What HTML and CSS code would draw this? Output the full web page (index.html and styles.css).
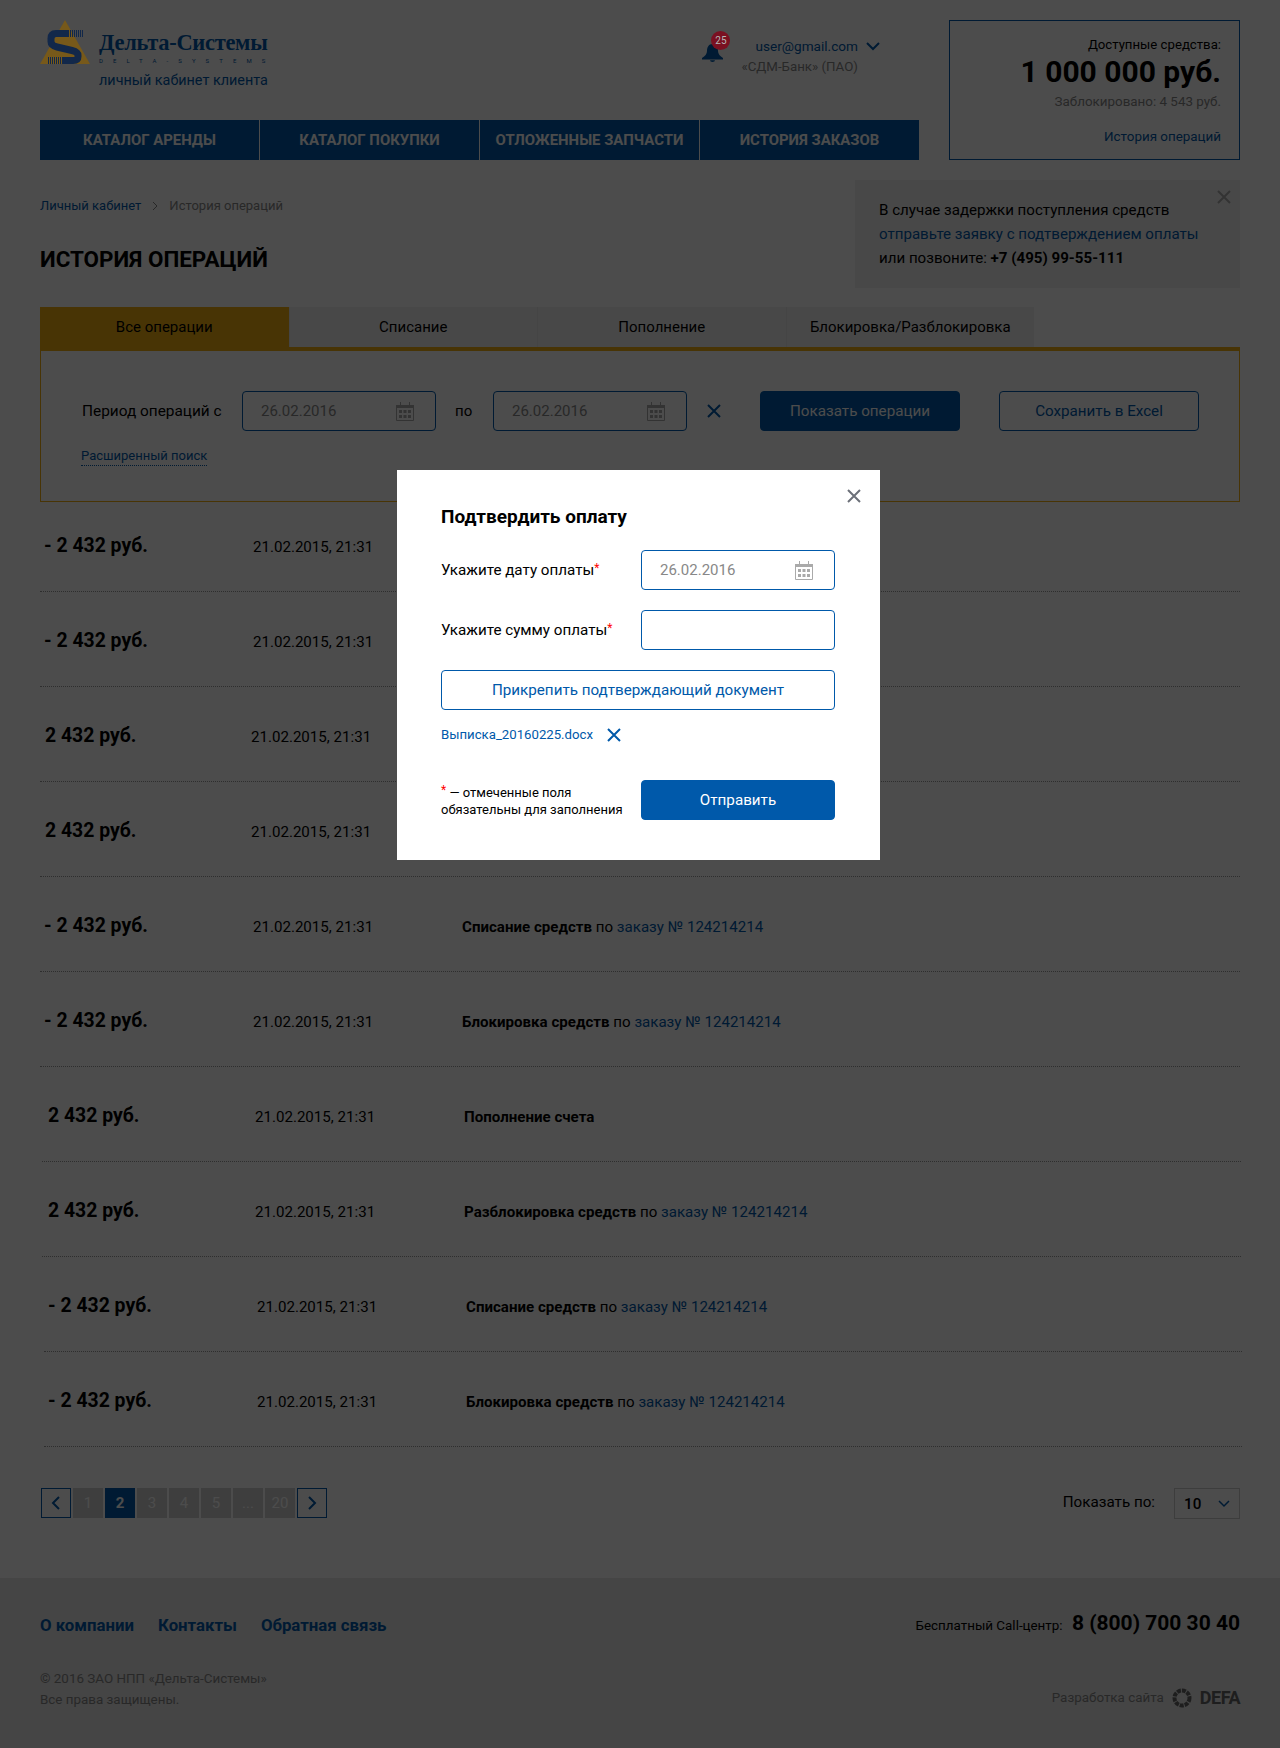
FILE: index.html
```html
<!DOCTYPE html>
<html lang="ru">

<head>
  <meta charset="utf-8">
  <title>История операций</title>
  <link rel="stylesheet" href="styles.css">
</head>

<body>
  <svg class="sprite" width="0" height="0">
    <symbol id="cal" viewBox="0 0 20 20">
      <path d="M1.500 4.500h17v15h-17z" fill="none" stroke="currentColor"/>
      <path d="M1 4h18v3H1zM5 1h1v3H5zM14 1h1v3h-1z" fill="currentColor"/>
      <path d="M4 9h3v3H4zM8.500 9h3v3h-3zM13 9h3v3h-3zM4 14h3v3H4zM8.500 14h3v3h-3zM13 14h3v3h-3z" fill="currentColor"/>
    </symbol>
    <symbol id="cross" viewBox="0 0 14 14">
      <path d="M1 1l12 12M13 1L1 13" fill="none" stroke="currentColor" stroke-width="2"/>
    </symbol>
  </svg>

  <div class="page">
    <header class="header">
      <div class="header-left">
        <div class="header-top">
          <div class="logo">
            <svg class="logo-mark" width="50" height="44" viewBox="0 0 50 44">
              <path d="M25 0L50 44H0z" fill="#77591a"/>
              <path d="M28 13.500H16q-5 0-5 5v3q0 4 6 5.500l15 3.500q6 1.500 6 5v1q0 4-5 4H22" fill="none" stroke="#12284a" stroke-width="7"/>
              <path d="M28.500 10v7M30.500 10v7M32.500 10v7M34.500 10v7M36.500 10v7M38.500 10v7M40.500 10v7M42.500 10v7" stroke="#12284a"/>
              <path d="M8.500 37v7M10.500 37v7M12.500 37v7M14.500 37v7M16.500 37v7M18.500 37v7M20.500 37v7" stroke="#12284a"/>
            </svg>
            <div class="logo-text">
              <div class="logo-name">Дельта-Системы</div>
              <div class="logo-sub">DELTA-SYSTEMS</div>
              <div class="logo-cabinet">личный кабинет клиента</div>
            </div>
          </div>
          <div class="user">
            <div class="bell">
              <svg width="21" height="18" viewBox="0 0 21 18">
                <path d="M10.500 0c4 0 5.500 3.500 5.500 7 0 3 2 5 5 7v1.500H0V14c3-2 5-4 5-7 0-3.500 1.500-7 5.500-7zM8 16.200h5a2.500 1.800 0 0 1-5 0z" fill="#0059aa"/>
              </svg>
              <span class="badge">25</span>
            </div>
            <div class="user-info">
              <div class="user-mail"><a href="#">user@gmail.com</a></div>
              <div class="user-bank">«СДМ-Банк» (ПАО)</div>
            </div>
            <svg class="user-arrow" width="14" height="9" viewBox="0 0 14 9">
              <path d="M1 1l6 6 6-6" fill="none" stroke="#0059aa" stroke-width="2"/>
            </svg>
          </div>
        </div>
        <nav class="nav">
          <a href="#">Каталог аренды</a>
          <a href="#">Каталог покупки</a>
          <a href="#">Отложенные запчасти</a>
          <a href="#">История заказов</a>
        </nav>
      </div>
      <div class="balance">
        <div class="balance-label">Доступные средства:</div>
        <div class="balance-sum">1 000 000 руб.</div>
        <div class="balance-locked">Заблокировано: 4 543 руб.</div>
        <a class="balance-link" href="#">История операций</a>
      </div>
    </header>

    <div class="title-row">
      <div>
        <div class="crumbs">
          <a href="#">Личный кабинет</a>
          <svg width="6" height="10" viewBox="0 0 6 10"><path d="M1 1l4 4-4 4" fill="none" stroke="#888"/></svg>
          <span>История операций</span>
        </div>
        <h1>История операций</h1>
      </div>
      <div class="notice">
        <svg class="notice-close" width="14" height="14"><use href="#cross"/></svg>
        В случае задержки поступления средств<br>
        <a href="#">отправьте заявку с подтверждением оплаты</a><br>
        или позвоните: <b>+7 (495) 99-55-111</b>
      </div>
    </div>

    <div class="tabs">
      <a class="tab active" href="#">Все операции</a>
      <a class="tab" href="#">Списание</a>
      <a class="tab" href="#">Пополнение</a>
      <a class="tab" href="#">Блокировка/Разблокировка</a>
    </div>
    <div class="filter">
      <div class="filter-row">
        <span class="filter-label">Период операций с</span>
        <div class="field filter-date">
          <span class="field-value">26.02.2016</span>
          <svg width="20" height="20"><use href="#cal"/></svg>
        </div>
        <span class="filter-to">по</span>
        <div class="field filter-date">
          <span class="field-value">26.02.2016</span>
          <svg width="20" height="20"><use href="#cal"/></svg>
        </div>
        <svg class="filter-clear" width="14" height="14"><use href="#cross"/></svg>
        <a class="btn btn-solid filter-show" href="#">Показать операции</a>
        <a class="btn btn-line filter-save" href="#">Сохранить в Excel</a>
      </div>
      <a class="filter-more" href="#">Расширенный поиск</a>
    </div>

    <div class="list">
      <div class="row">
        <div class="amount">- 2 432 руб.</div><div class="date">21.02.2015, 21:31</div>
      </div>
      <div class="row">
        <div class="amount">- 2 432 руб.</div><div class="date">21.02.2015, 21:31</div>
      </div>
      <div class="row row-in">
        <div class="amount">2 432 руб.</div><div class="date">21.02.2015, 21:31</div>
      </div>
      <div class="row row-in">
        <div class="amount">2 432 руб.</div><div class="date">21.02.2015, 21:31</div>
      </div>
      <div class="row">
        <div class="amount">- 2 432 руб.</div><div class="date">21.02.2015, 21:31</div>
        <div class="what"><b>Списание средств</b> по <a href="#">заказу № 124214214</a></div>
      </div>
      <div class="row">
        <div class="amount">- 2 432 руб.</div><div class="date">21.02.2015, 21:31</div>
        <div class="what"><b>Блокировка средств</b> по <a href="#">заказу № 124214214</a></div>
      </div>
      <div class="row row-shift">
        <div class="amount">2 432 руб.</div><div class="date">21.02.2015, 21:31</div>
        <div class="what"><b>Пополнение счета</b></div>
      </div>
      <div class="row row-shift">
        <div class="amount">2 432 руб.</div><div class="date">21.02.2015, 21:31</div>
        <div class="what"><b>Разблокировка средств</b> по <a href="#">заказу № 124214214</a></div>
      </div>
      <div class="row row-shift2">
        <div class="amount">- 2 432 руб.</div><div class="date">21.02.2015, 21:31</div>
        <div class="what"><b>Списание средств</b> по <a href="#">заказу № 124214214</a></div>
      </div>
      <div class="row row-shift2">
        <div class="amount">- 2 432 руб.</div><div class="date">21.02.2015, 21:31</div>
        <div class="what"><b>Блокировка средств</b> по <a href="#">заказу № 124214214</a></div>
      </div>
    </div>

    <div class="pager-row">
      <div class="pager">
        <a class="pager-arrow" href="#"><svg width="10" height="16" viewBox="0 0 10 16"><path d="M8 2L2 8l6 6" fill="none" stroke="#0059aa" stroke-width="2"/></svg></a>
        <a href="#">1</a>
        <a class="current" href="#">2</a>
        <a href="#">3</a>
        <a href="#">4</a>
        <a href="#">5</a>
        <a href="#">...</a>
        <a href="#">20</a>
        <a class="pager-arrow" href="#"><svg width="10" height="16" viewBox="0 0 10 16"><path d="M2 2l6 6-6 6" fill="none" stroke="#0059aa" stroke-width="2"/></svg></a>
      </div>
      <div class="per-page">
        <span>Показать по:</span>
        <div class="per-select">
          10
          <svg width="12" height="8" viewBox="0 0 12 8"><path d="M1 1l5 5 5-5" fill="none" stroke="#0059aa" stroke-width="1.500"/></svg>
        </div>
      </div>
    </div>
  </div>

  <footer class="footer">
    <div class="footer-row">
      <div class="footer-links">
        <a href="#">О компании</a>
        <a href="#">Контакты</a>
        <a href="#">Обратная связь</a>
      </div>
      <div class="call">Бесплатный Call-центр: <b>8 (800) 700 30 40</b></div>
    </div>
    <div class="footer-row footer-bottom">
      <div>© 2016 ЗАО НПП «Дельта-Системы»<br>Все права защищены.</div>
      <div class="defa">
        Разработка сайта
        <svg width="20" height="20" viewBox="0 0 20 20"><circle cx="10" cy="10" r="7.500" fill="none" stroke="#666" stroke-width="4" stroke-dasharray="4 1"/></svg>
        <b>DEFA</b>
      </div>
    </div>
  </footer>

  <div class="overlay"></div>

  <div class="modal">
    <svg class="modal-close" width="14" height="14"><use href="#cross"/></svg>
    <h2>Подтвердить оплату</h2>
    <div class="form-line">
      <label>Укажите дату оплаты<i>*</i></label>
      <div class="field">
        <span class="field-value">26.02.2016</span>
        <svg width="20" height="20"><use href="#cal"/></svg>
      </div>
    </div>
    <div class="form-line">
      <label>Укажите сумму оплаты<i>*</i></label>
      <div class="field"></div>
    </div>
    <a class="btn btn-line" href="#">Прикрепить подтверждающий документ</a>
    <div class="file">
      <a href="#">Выписка_20160225.docx</a>
      <svg width="14" height="14"><use href="#cross"/></svg>
    </div>
    <div class="form-line form-end">
      <p class="form-note"><i>*</i> — отмеченные поля<br>обязательны для заполнения</p>
      <a class="btn btn-solid" href="#">Отправить</a>
    </div>
  </div>
</body>

</html>
```

FILE: styles.css
```css
* {
  box-sizing: border-box;
  margin: 0;
  padding: 0;
}

body {
  position: relative;
  height: 1748px;
  overflow: hidden;
  font-family: 'Roboto', 'Noto Sans', sans-serif;
  font-size: 14px;
  color: #000;
  background-color: #fff;
}

a {
  color: #0059aa;
  text-decoration: none;
}

.sprite {
  position: absolute;
}

.page {
  height: 1578px;
  padding: 20px 40px 0;
}

/* header */

.header {
  display: flex;
  justify-content: space-between;
  height: 140px;
}

.header-left {
  width: 879px;
  display: flex;
  flex-direction: column;
  justify-content: space-between;
}

.header-top {
  display: flex;
  justify-content: space-between;
}

.logo {
  display: flex;
}

/* logo and badge keep their brighter colours over the dark layer */
.logo-mark {
  position: relative;
  z-index: 2;
  flex: none;
  margin-right: 9px;
}

.logo-text {
  width: 168px;
  padding-top: 11px;
  color: #0059aa;
}

.logo-name {
  font-family: 'Liberation Serif', serif;
  font-size: 22.500px;
  font-weight: 700;
  letter-spacing: -0.3px;
  line-height: 24px;
  white-space: nowrap;
}

.logo-sub {
  font-size: 6px;
  line-height: 6px;
  margin-top: 3px;
  letter-spacing: 10.1px;
  white-space: nowrap;
}

.logo-cabinet {
  font-size: 14.400px;
  line-height: 20px;
  margin-top: 7px;
  white-space: nowrap;
}

.user {
  display: flex;
  align-items: flex-start;
  padding-top: 15px;
  margin-right: 39px;
}

.bell {
  position: relative;
  width: 21px;
  height: 18px;
  margin-top: 9px;
  margin-right: 18px;
}

.badge {
  position: absolute;
  z-index: 2;
  top: -13px;
  left: 9px;
  width: 19px;
  height: 19px;
  border-radius: 50%;
  background-color: #7a1021;
  color: #b5b5b5;
  font-size: 10px;
  line-height: 19px;
  text-align: center;
}

.user-info {
  text-align: right;
  font-size: 13.600px;
  line-height: 22px;
}

.user-bank {
  color: #888;
  font-size: 13.300px;
  line-height: 20px;
}

.user-arrow {
  margin: 7px 0 0 8px;
}

.nav {
  display: flex;
  height: 40px;
  background-color: #0059aa;
}

.nav a {
  flex: 1;
  border-left: 1px solid #fff;
  color: #fff;
  font-size: 14.900px;
  font-weight: 700;
  line-height: 40px;
  text-align: center;
  text-transform: uppercase;
}

.nav a:first-child {
  border-left: none;
}

.balance {
  width: 291px;
  border: 1px solid #0059aa;
  padding: 15px 18px 0 0;
  text-align: right;
}

.balance-label {
  font-size: 13.200px;
  line-height: 18px;
}

.balance-sum {
  font-size: 30px;
  font-weight: 700;
  line-height: 36px;
}

.balance-locked {
  margin-top: 2px;
  color: #888;
  font-size: 13.400px;
  line-height: 20px;
}

.balance-link {
  display: block;
  margin-top: 15px;
  font-size: 13.400px;
  line-height: 20px;
}

/* title */

.title-row {
  display: flex;
  justify-content: space-between;
  margin-top: 20px;
}

.crumbs {
  display: flex;
  align-items: center;
  gap: 11px;
  margin-top: 17px;
  font-size: 13px;
  line-height: 18px;
  color: #888;
}

h1 {
  margin-top: 29px;
  font-size: 22.400px;
  font-weight: 700;
  line-height: 30px;
  text-transform: uppercase;
}

.notice {
  position: relative;
  width: 385px;
  height: 108px;
  padding: 18px 0 0 24px;
  background-color: #f2f2f2;
  font-size: 15.100px;
  line-height: 24px;
}

.notice-close {
  position: absolute;
  top: 10px;
  right: 9px;
  color: #aaa;
}

/* tabs and filter */

.tabs {
  display: flex;
  margin-top: 19px;
}

.tab {
  width: 248.500px;
  height: 40px;
  background-color: #f2f2f2;
  border-left: 1px solid #e6e6e6;
  color: #000;
  font-size: 15px;
  line-height: 40px;
  text-align: center;
}

.tab.active {
  border-left: none;
  background-color: #f0ae12;
}

.filter {
  height: 155px;
  margin-bottom: -5px;
  border: 1px solid #f0ae12;
  border-top-width: 4px;
  padding: 40px 0 0 41px;
}

.filter-row {
  display: flex;
  align-items: center;
}

.filter-label {
  width: 160px;
  font-size: 15.400px;
  white-space: nowrap;
}

.field {
  display: flex;
  align-items: center;
  justify-content: space-between;
  width: 194px;
  height: 40px;
  padding: 0 20px 0 18px;
  border: 1px solid #0059aa;
  border-radius: 4px;
  color: #888;
  background-color: #fff;
}

.field-value {
  font-size: 15px;
}

.field svg {
  color: #aaa;
}

.filter-to {
  width: 57px;
  padding-left: 19px;
  font-size: 15px;
}

.filter-clear {
  margin: 0 39px 0 20px;
  color: #0059aa;
}

.btn {
  display: block;
  height: 40px;
  border-radius: 4px;
  font-size: 15.200px;
  line-height: 38px;
  text-align: center;
}

.btn-solid {
  background-color: #0059aa;
  border: 1px solid #0059aa;
  color: #fff;
}

.btn-line {
  background-color: #fff;
  border: 1px solid #0059aa;
}

.filter-show {
  width: 200px;
}

.filter-save {
  width: 200px;
  margin-left: 39px;
}

.filter-more {
  display: inline-block;
  margin-top: 16px;
  margin-left: -1px;
  border-bottom: 1px dotted #0059aa;
  font-size: 13px;
  line-height: 18px;
}

/* operations */

.row {
  display: grid;
  grid-template-columns: 209px 209px 1fr;
  align-items: center;
  height: 95px;
  padding-left: 4px;
  border-bottom: 1px dotted #999;
}

.row-in {
  padding-left: 5px;
  grid-template-columns: 206px 209px 1fr;
}

.row-shift {
  margin-left: 2px;
  margin-right: -1px;
  padding-left: 6px;
  grid-template-columns: 207px 209px 1fr;
}

.row-shift2 {
  margin-left: 4px;
  margin-right: -2px;
  padding-left: 4px;
  grid-template-columns: 209px 209px 1fr;
}

.amount {
  padding-top: 3px;
  font-size: 19.400px;
  font-weight: 700;
}

.date,
.what {
  padding-top: 6px;
  font-size: 15.100px;
}

/* pager */

.pager-row {
  display: flex;
  justify-content: space-between;
  margin-top: 41px;
}

.pager {
  display: flex;
  gap: 2px;
  margin-left: 1px;
}

.pager a {
  width: 30px;
  height: 30px;
  background-color: #d0d0d0;
  color: #fff;
  font-size: 15px;
  line-height: 30px;
  text-align: center;
}

.pager a.current {
  background-color: #0059aa;
  font-weight: 700;
}

.pager a.pager-arrow {
  display: flex;
  align-items: center;
  justify-content: center;
  border: 1px solid #0059aa;
  background-color: #fff;
}

.per-page {
  display: flex;
  gap: 19px;
  font-size: 15.200px;
}

.per-page span {
  line-height: 28px;
}

.per-select {
  display: flex;
  align-items: center;
  justify-content: space-between;
  width: 66px;
  height: 31px;
  padding: 0 9px;
  border: 1px solid #ccc;
  font-weight: 500;
}

/* footer */

.footer {
  height: 170px;
  padding: 33px 40px 0;
  background-color: #e6e6e6;
}

.footer-row {
  display: flex;
  justify-content: space-between;
  align-items: center;
}

.footer-links {
  display: flex;
  gap: 24px;
  padding-top: 3px;
  font-size: 16.800px;
  font-weight: 700;
}

.call {
  font-size: 13.400px;
}

.call b {
  margin-left: 6px;
  font-size: 21px;
}

.footer-bottom {
  align-items: flex-end;
  margin-top: 33px;
  color: #888;
  font-size: 13.400px;
  line-height: 21px;
}

.defa {
  display: flex;
  align-items: center;
  gap: 8px;
  font-size: 13.400px;
  padding-bottom: 2px;
}

.defa b {
  font-size: 18px;
  letter-spacing: -0.5px;
  color: #666;
}

/* modal */

.overlay {
  position: absolute;
  top: 0;
  left: 0;
  right: 0;
  bottom: 0;
  background-color: rgba(0, 0, 0, 0.7);
}

.modal {
  position: absolute;
  top: 470px;
  left: 397px;
  width: 483px;
  height: 390px;
  padding: 34px 45px 0 44px;
  background-color: #fff;
}

.modal-close {
  position: absolute;
  top: 19px;
  right: 19px;
  color: #6c7079;
}

h2 {
  font-size: 19px;
  font-weight: 700;
  line-height: 26px;
  margin-bottom: 20px;
}

.form-line {
  display: flex;
  justify-content: space-between;
  align-items: center;
  margin-bottom: 20px;
}

.form-line label {
  font-size: 15.200px;
}

.form-line i,
.form-note i {
  color: #ff0000;
  font-style: normal;
  vertical-align: 3px;
  font-size: 12px;
}

.file {
  display: flex;
  align-items: center;
  gap: 14px;
  margin-top: 15px;
  font-size: 13.200px;
  line-height: 20px;
}

.file svg {
  color: #0059aa;
}

.form-end {
  margin-top: 35px;
}

.form-end .btn {
  width: 194px;
}

.form-note {
  font-size: 13px;
  line-height: 17px;
}
```
